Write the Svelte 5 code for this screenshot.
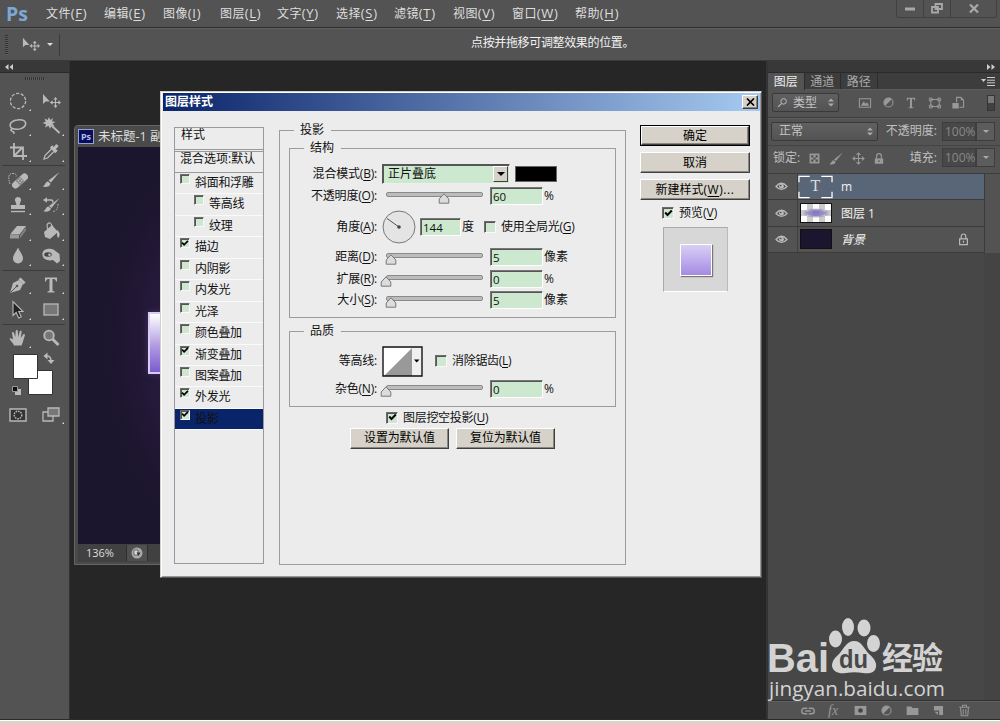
<script>
  const menus = [
    { text: "文件", key: "F", width: 58 },
    { text: "编辑", key: "E", width: 59 },
    { text: "图像", key: "I", width: 57 },
    { text: "图层", key: "L", width: 57 },
    { text: "文字", key: "Y", width: 59 },
    { text: "选择", key: "S", width: 58 },
    { text: "滤镜", key: "T", width: 59 },
    { text: "视图", key: "V", width: 59 },
    { text: "窗口", key: "W", width: 63 },
    { text: "帮助", key: "H", width: 60 },
  ];

  const toolGroups = [
    ["marquee", "move", "lasso", "wand", "crop", "dropper"],
    ["heal", "brush", "stamp", "history", "eraser", "bucket", "drop", "sponge"],
    ["pen", "type", "arrow", "rect"],
    ["hand", "zoom"],
  ];
  const noFlyout = ["move", "zoom"];

  let effects = $state([
    { name: "斜面和浮雕", on: false },
    { name: "等高线", on: false, sub: true },
    { name: "纹理", on: false, sub: true },
    { name: "描边", on: true },
    { name: "内阴影", on: false },
    { name: "内发光", on: false },
    { name: "光泽", on: false },
    { name: "颜色叠加", on: false },
    { name: "渐变叠加", on: true },
    { name: "图案叠加", on: false },
    { name: "外发光", on: true },
    { name: "投影", on: true },
  ]);
  let selected = $state("投影");
  let globalLight = $state(false);
  let antialias = $state(false);
  let knockout = $state(true);
  let preview = $state(true);

  const offsets = [
    { text: "距离", key: "D", value: 5, pos: 5, unit: "像素", height: 22 },
    { text: "扩展", key: "R", value: 0, pos: 0, unit: "%", height: 21 },
    { text: "大小", key: "S", value: 5, pos: 5, unit: "像素", height: 22 },
  ];

  const layers = [
    { name: "m", kind: "text" },
    { name: "图层 1", kind: "pixel" },
    { name: "背景", kind: "fill", locked: true },
  ];

  const icons = {
    marquee: `<circle cx="10" cy="10" r="7.6" fill="none" stroke="currentColor" stroke-width="1.3" stroke-dasharray="3.2 1.6"/>`,
    move: `<path d="M2 3v10l2.6-2.6h4.2z" fill="currentColor"/><path d="M14.5 7v9M10 11.5h9M13 8.5l1.5-1.7L16 8.5M13 14.5l1.5 1.7 1.5-1.7M11.5 10l-1.7 1.5 1.7 1.5M17.5 10l1.7 1.5-1.7 1.5" fill="none" stroke="currentColor" stroke-width="1.1"/>`,
    lasso: `<path d="M4.500 12.500C0 10.500 2 5 9 4c6-1 9.500 1 8.500 4.500-1 4-7 5.500-11 4.500-3-.7-4.500 1-3 2s3 0 2.500 3" fill="none" stroke="currentColor" stroke-width="1.500"/>`,
    wand: `<path d="M8 1l1.200 3L12 2l-1 3.200 3.500.8-3 1.500 2 2.800-3.200-.8L9 13 7.500 9.800 4 11.500l1-3.300L1.500 7l3.200-1.300L3.500 2.500 6.600 4z" fill="currentColor"/><path d="M10.500 9.500l8 7.500" stroke="currentColor" stroke-width="1.900"/>`,
    crop: `<path d="M6 1v13h13M2 5.500h13V18M6.500 13.500L15 5" fill="none" stroke="currentColor" stroke-width="1.800"/>`,
    dropper: `<path d="M3 17l1-3.500L11 6.500l2.500 2.500-7 7z" fill="none" stroke="currentColor" stroke-width="1.300"/><path d="M10 4.500l5.500 5.500M12.500 7.500l4-4.500" stroke="currentColor" stroke-width="3.200"/>`,
    heal: `<g transform="rotate(-42 12 11)"><rect x="2.500" y="7.500" width="19" height="7" rx="3.500" fill="currentColor"/><rect x="9" y="7.500" width="6" height="7" fill="#8a8a8a"/><path d="M10.500 9.500h1M13 9.500h1M10.500 12h1M13 12h1" stroke="#ddd"/></g><path d="M2 14C0 8 0 3 5 3.500s3 3 3 3" fill="none" stroke="currentColor" stroke-dasharray="1.500 1"/>`,
    brush: `<path d="M18.500 2L10 12.500 7.500 10.500z" fill="currentColor"/><path d="M7 11.500l2.500 2C9 17 5 17.500 1.500 16.500 4.500 15.500 4 12 7 11.500z" fill="currentColor"/>`,
    stamp: `<path d="M10 2a3 3 0 0 1 2.500 4.800L11.500 10H17v4H3v-4h5.500L7.500 6.800A3 3 0 0 1 10 2z" fill="currentColor"/><path d="M3 16.500h14" stroke="currentColor" stroke-width="1.400"/>`,
    history: `<path d="M18.500 3L10.500 13l-2.500-2z" fill="currentColor"/><path d="M7.500 11.500l2.500 2c-1 3.500-5 3.500-8 2.800C5 15.500 4.500 12 7.500 11.500z" fill="currentColor"/><path d="M5 5h5c2 0 2 1 1.500 2.500" fill="none" stroke="currentColor" stroke-width="1.500"/><path d="M2 5l4-2.800v5.600z" fill="currentColor"/><path d="M17 9q0 7-5 7.500" fill="none" stroke="currentColor" stroke-dasharray="1.500 1.200"/>`,
    eraser: `<path d="M2 13.500L9 5h9l-6.500 8.500z" fill="currentColor"/><path d="M2 14h9v3.500H2z" fill="#999"/><path d="M12 14l6-8v3.500l-6 8z" fill="#808080"/>`,
    bucket: `<path d="M3 11l8-7 6 7-8 7-5-2z" fill="currentColor"/><path d="M7 9c-3-8 3-9 4-4v5" fill="none" stroke="currentColor" stroke-width="1.200"/><path d="M16 9c3 2 3 5 2 7s-2 0-2-3z" fill="currentColor"/>`,
    drop: `<path d="M10 1.500C12 6 15 9 15 12.500a5 5 0 0 1-10 0C5 9 8 6 10 1.500z" fill="currentColor"/>`,
    sponge: `<path d="M1.500 7c1-4 7-5 11-3.500L18.500 8l.5 7-3 2.500-4-3.500c-5 1.500-11.500-1-10.500-7z" fill="currentColor"/><ellipse cx="7" cy="8.500" rx="3.800" ry="2.200" fill="#454545"/><circle cx="8.500" cy="8.700" r="1.300" fill="currentColor"/>`,
    pen: `<path d="M2 18l3-10 6-3 4 4-3 6z" fill="currentColor"/><path d="M2.500 17.500l5.500-5.500" stroke="#555"/><circle cx="9" cy="11" r="1.300" fill="#555"/><path d="M11.500 3.500l5 5" stroke="currentColor" stroke-width="3"/>`,
    type: `<path d="M4 2.500h12v4h-1c-.4-1.900-1-2.500-3.500-2.500v11c0 1 .5 1.300 2 1.500v1h-7v-1c1.500-.2 2-.5 2-1.500V4C6 4 5.400 4.600 5 6.500H4z" fill="currentColor"/>`,
    arrow: `<path d="M5 1.500v14l3.200-3 2.500 5.500 2.500-1.200-2.500-5.300H15z" fill="#222" stroke="currentColor" stroke-width="1.100"/>`,
    rect: `<rect x="3" y="4" width="14" height="11" fill="#777" stroke="currentColor" stroke-width="1.300"/>`,
    hand: `<path d="M6 17.500c-.5-2.500-4-4.500-4.500-7 1.500-1 2.500.5 3.500 1L4 5c0-1.500 1.700-1.500 2 0L7.300 9 7.700 3c.2-1.500 2-1.500 2.100 0l.4 6 1.500-5.500c.5-1.200 2.200-.8 2 .5L12.700 10l2.500-3.500c1-1 2.300 0 1.600 1.300C15.500 11 15 15 13.500 17.500z" fill="currentColor"/>`,
    zoom: `<circle cx="8" cy="7.500" r="4.800" fill="#777" stroke="currentColor" stroke-width="1.800"/><path d="M11.500 11l6 6" stroke="currentColor" stroke-width="3"/>`,
    image: `<path d="M2 4h16v12H2z" fill="none" stroke="currentColor" stroke-width="1.500"/><path d="M4 14l4-6 3 3 2-2 3 5z" fill="currentColor"/>`,
    adjust: `<circle cx="10" cy="10" r="7" fill="none" stroke="currentColor" stroke-width="1.600"/><path d="M15 5a7 7 0 0 0-10 10z" fill="currentColor"/>`,
    shape: `<path d="M4 5h12v10H4zM2 3h4v4H2zM14 3h4v4h-4zM2 13h4v4H2zM14 13h4v4h-4z" fill="none" stroke="currentColor" stroke-width="1.400"/>`,
    smart: `<path d="M8 9V2h6l4 4v10h-6" fill="none" stroke="currentColor" stroke-width="1.600"/><path d="M14 2v4h4M2 10h9v8H2z" fill="currentColor"/>`,
    grid: `<path d="M1 1h18v18H1z" fill="currentColor"/><path d="M4 4h4v4H4zM12 4h4v4h-4zM8 8h4v4H8zM4 12h4v4H4zM12 12h4v4h-4z" fill="#505050"/>`,
    cross: `<path d="M10 1v18M1 10h18M7 4.500l3-3 3 3M7 15.500l3 3 3-3M4.500 7l-3 3 3 3M15.500 7l3 3-3 3" fill="none" stroke="currentColor" stroke-width="1.700"/>`,
    lock: `<path d="M3 9h14v9H3z" fill="currentColor"/><path d="M6 9V5a4 4 0 0 1 8 0v4" fill="none" stroke="currentColor" stroke-width="2"/><path d="M10 12v3" stroke="#444" stroke-width="1.500"/>`,
    lockOutline: `<path d="M4 9h12v9H4zM6.500 9V5a3.500 3.500 0 0 1 7 0v4M10 12v3" fill="none" stroke="currentColor" stroke-width="1.800"/>`,
    eye: `<path d="M1.500 10q8.500-10 17 0-8.500 9-17 0z" fill="none" stroke="currentColor" stroke-width="2"/><circle cx="10" cy="9.500" r="3.700" fill="currentColor"/><circle cx="9" cy="8.500" r="1.100" fill="#333"/>`,
    link: `<path d="M9 6H5a4 4 0 0 0 0 8h4M11 6h4a4 4 0 0 1 0 8h-4M6 10h8" fill="none" stroke="currentColor" stroke-width="2"/>`,
    mask: `<path d="M1 3h18v14H1z" fill="currentColor"/><circle cx="10" cy="10" r="3.600" fill="#444"/>`,
    folder: `<path d="M1 4h7l2 2h9v11H1z" fill="currentColor"/>`,
    page: `<path d="M3 3h14v14h-6v-7H3z" fill="currentColor"/><path d="M4 12h5v5z" fill="currentColor"/>`,
    trash: `<path d="M4 6l1 12h10l1-12M2 5h16M7 5V2h6v3M8 8v8M12 8v8" fill="none" stroke="currentColor" stroke-width="1.600"/>`,
    search: `<circle cx="12" cy="8" r="5" fill="none" stroke="currentColor" stroke-width="1.800"/><path d="M8 12l-6 6" stroke="currentColor" stroke-width="2"/>`,
    quick: `<path d="M2 4h16v12H2z" fill="#333" stroke="currentColor" stroke-width="1.400"/><circle cx="10" cy="10" r="3.800" fill="none" stroke="currentColor" stroke-width="1.400" stroke-dasharray="1.600 .9"/>`,
    screen: `<path d="M2 7h10v9H2z" fill="#555" stroke="currentColor" stroke-width="1.300"/><path d="M7 3h11v8H7z" fill="#777" stroke="currentColor" stroke-width="1.300"/>`,
  };
</script>

{#snippet icon(name, size = 20)}
  <svg class="icon" width={size} height={size} viewBox="0 0 20 20">{@html icons[name]}</svg>
{/snippet}

{#snippet label(text, key, tail = "")}
  {text}<span class="key">(<u>{key}</u>){tail}</span>
{/snippet}

{#snippet box(on)}
  <span class="box">
    {#if on}
      <svg width="9" height="9" viewBox="0 0 9 9"><path d="M1.200 3.500l2.300 2.500L7.800 1.500" fill="none" stroke="#000" stroke-width="1.900" /></svg>
    {/if}
  </span>
{/snippet}

{#snippet slider(pos)}
  <div class="slider">
    <div class="track"></div>
    <svg class="thumb" style:left="{pos}px" width="12" height="11" viewBox="0 0 12 11"><path d="M6 .8l4.800 5.200v4.200H1.200V6z" fill="#dcdcdc" stroke="#777" /></svg>
  </div>
{/snippet}

<div class="app">
  <header class="menubar">
    <span class="brand">Ps</span>
    {#each menus as menu}
      <span class="menu" style:width="{menu.width}px">{@render label(menu.text, menu.key)}</span>
    {/each}
    <div class="winbtns">
      <span><svg width="10" height="4"><path d="M0 2h10" stroke="#a8a8a8" stroke-width="3" /></svg></span>
      <span><svg width="12" height="11" viewBox="0 0 12 11"><path d="M4.500 1h6.500v5H4.500zM1 4h6v5.500H1z" fill="#535353" stroke="#a8a8a8" stroke-width="1.800" /></svg></span>
      <span class="wide"><svg width="10" height="9" viewBox="0 0 10 9"><path d="M1 .5l8 8M9 .5l-8 8" stroke="#a8a8a8" stroke-width="2.200" /></svg></span>
    </div>
  </header>

  <div class="options">
    <span class="vgrip"></span>
    <span class="curtool">{@render icon("move", 19)}</span>
    <span class="caret"></span>
    <span class="vline"></span>
    <span class="hint">点按并拖移可调整效果的位置。</span>
  </div>

  <div class="work">
    <aside class="toolbox">
      <div class="strip left"><svg width="8" height="6"><path d="M3.500 0v6L0 3zM8 0v6L4.500 3z" fill="#ccc" /></svg></div>
      <div class="hgrip"><i></i></div>
      {#each toolGroups as group}
        <div class="tools">
          {#each group as tool}
            <span class="tool" class:fly={!noFlyout.includes(tool)}>{@render icon(tool)}</span>
          {/each}
        </div>
      {/each}
      <svg class="swatches" width="69" height="50" viewBox="0 1 69 50">
        <path d="M28.500 20.500h24v24h-24z" fill="#fff" stroke="#333" />
        <path d="M13.500 4.500h24v24h-24z" fill="#fff" stroke="#333" />
        <path d="M46 6q5-.5 5 5" fill="none" stroke="#bbb" stroke-width="1.500" />
        <path d="M47.500 2.500v7L43.500 6zM47.500 10h7L51 14z" fill="#bbb" />
        <path d="M15 39h6v6h-6z" fill="#bbb" /><path d="M12.500 36.500h5v5h-5z" fill="#111" stroke="#999" />
      </svg>
      <div class="tools">
        <span class="tool">{@render icon("quick")}</span>
        <span class="tool fly">{@render icon("screen")}</span>
      </div>
    </aside>

    <main class="canvas">
      <section class="doc">
        <div class="doc-title"><span class="ps">Ps</span>未标题-1 副本</div>
        <div class="art"><div class="glyph"></div></div>
        <div class="doc-status">
          <span class="pct">136%</span>
          <span class="info"><svg width="12" height="12" viewBox="0 0 12 12"><circle cx="6" cy="6" r="5.500" fill="#aaa" /><path d="M3 3h4v5H3z" fill="#ddd" stroke="#555" stroke-width=".8" /><path d="M5.500 5.500h4L7.500 9z" fill="#333" /></svg></span>
        </div>
      </section>
    </main>

    <aside class="panel">
      <div class="strip right"><svg width="8" height="6"><path d="M0 0v6l3.500-3zM4.500 0v6L8 3z" fill="#ccc" /></svg></div>
      <div class="tabs">
        <span class="tab active">图层</span>
        <span class="tab">通道</span>
        <span class="tab">路径</span>
        <svg class="flymenu" width="14" height="9" viewBox="0 0 14 9"><path d="M0 2h5L2.500 5z" fill="#ccc" /><path d="M6 .5h8M6 3.200h8M6 5.800h8M6 8.500h8" stroke="#ccc" /></svg>
      </div>
      <div class="filter">
        <div class="drop kind">{@render icon("search", 11)}<span>类型</span><svg width="6" height="9"><path d="M0 3.500h6L3 .5zM0 5.500h6L3 8.500z" fill="#aaa" /></svg></div>
        <div class="filter-icons">
          {@render icon("image", 14)}
          {@render icon("adjust", 13)}
          {@render icon("type", 14)}
          {@render icon("shape", 14)}
          {@render icon("smart", 14)}
        </div>
        <span class="toggle"></span>
      </div>
      <div class="blend">
        <div class="drop mode"><span>正常</span><svg width="6" height="9"><path d="M0 3.500h6L3 .5zM0 5.500h6L3 8.500z" fill="#aaa" /></svg></div>
        <span class="plabel">不透明度:</span>
        <span class="pval">100%</span><span class="pbtn"><i class="caret"></i></span>
      </div>
      <div class="blend locks">
        <span>锁定:</span>
        <div class="lock-icons">
          {@render icon("grid", 11)}
          {@render icon("brush", 16)}
          {@render icon("cross", 13)}
          {@render icon("lock", 12)}
        </div>
        <span class="plabel">填充:</span>
        <span class="pval">100%</span><span class="pbtn"><i class="caret"></i></span>
      </div>
      <div class="layers">
        {#each layers as layer, i}
          <div class="layer" class:current={i === 0}>
            <span class="eye">{@render icon("eye", 13)}</span>
            <span class="thumbwrap">
              {#if layer.kind === "text"}
                <svg width="36" height="24" viewBox="0 0 36 24"><path d="M1 7V1h11M24 1h11v6M35 17v6H24M12 23H1v-6" fill="none" stroke="#fff" stroke-width="1.300" /></svg>
                <b class="tglyph">T</b>
              {:else}
                <span class="thumbbox {layer.kind}"></span>
              {/if}
            </span>
            <span class="lname" class:italic={layer.locked}>{layer.name}</span>
            {#if layer.locked}<span class="llock">{@render icon("lockOutline", 13)}</span>{/if}
          </div>
        {/each}
      </div>
      <div class="void"></div>
      <div class="foot">
        {@render icon("link", 14)}
        <em>fx</em>
        {@render icon("mask", 13)}
        {@render icon("adjust", 13)}
        {@render icon("folder", 13)}
        {@render icon("page", 13)}
        {@render icon("trash", 13)}
      </div>
    </aside>
  </div>
  <div class="taskbar"></div>

  <section class="dialog">
    <div class="titlebar">
      <span>图层样式</span>
      <button class="close" aria-label="关闭"><svg width="9" height="8" viewBox="0 0 9 8"><path d="M1 .5l7 7M8 .5l-7 7" stroke="#000" stroke-width="1.700" /></svg></button>
    </div>
    <div class="body">
      <div class="styles">
        <div class="styles-head">样式</div>
        <div class="styles-blend">混合选项:默认</div>
        {#each effects as fx}
          <div class="fx" class:sub={fx.sub} class:sel={fx.name === selected}>
            {@render box(fx.on)}<span class="fx-name">{fx.name}</span>
          </div>
        {/each}
      </div>

      <fieldset class="outer">
        <legend>投影</legend>
        <fieldset class="group structure">
          <legend>结构</legend>
          <div class="row mode-row">
            <span class="rlabel">{@render label("混合模式", "B", ":")}</span>
            <div class="select"><span>正片叠底</span><i><b></b></i></div>
            <span class="color"></span>
          </div>
          <div class="row opacity-row">
            <span class="rlabel">{@render label("不透明度", "O", ":")}</span>
            {@render slider(58)}
            <span class="field">60</span><span class="unit">%</span>
          </div>
          <div class="row angle-row">
            <span class="rlabel">{@render label("角度", "A", ":")}</span>
            <svg class="dial" width="34" height="34" viewBox="0 0 34 34">
              <circle cx="17" cy="17" r="16" fill="#e4e4e4" stroke="#777" />
              <path d="M5 8.500L17 17" stroke="#555" /><circle cx="17" cy="17" r="1.800" fill="#444" />
            </svg>
            <span class="field short">144</span><span class="unit deg">度</span>
            {@render box(globalLight)}<span class="btext">{@render label("使用全局光", "G")}</span>
          </div>
          {#each offsets as o}
            <div class="row" style:height="{o.height}px">
              <span class="rlabel">{@render label(o.text, o.key, ":")}</span>
              {@render slider(o.pos)}
              <span class="field">{o.value}</span><span class="unit">{o.unit}</span>
            </div>
          {/each}
        </fieldset>

        <fieldset class="group quality">
          <legend>品质</legend>
          <div class="row contour-row">
            <span class="rlabel">等高线<span class="key">:</span></span>
            <svg class="contour" width="41" height="31" viewBox="0 0 41 31">
              <path d="M.5.500h40v30H.5z" fill="#fff" />
              <path d="M2 30L30 2v28z" fill="#999" />
              <path d="M30 1h10v29H30z" fill="#f0f0f0" />
              <path d="M1 1h39v29H1z" fill="none" stroke="#111" stroke-width="1.400" />
              <path d="M32 13.500h5.500L34.700 16.500z" fill="#000" />
            </svg>
            {@render box(antialias)}<span class="btext">{@render label("消除锯齿", "L")}</span>
          </div>
          <div class="row noise-row">
            <span class="rlabel">{@render label("杂色", "N", ":")}</span>
            {@render slider(0)}
            <span class="field">0</span><span class="unit">%</span>
          </div>
        </fieldset>

        <div class="knock">{@render box(knockout)}<span class="btext">{@render label("图层挖空投影", "U")}</span></div>
        <div class="defaults">
          <button class="btn">设置为默认值</button>
          <button class="btn">复位为默认值</button>
        </div>
      </fieldset>

      <div class="actions">
        <button class="btn primary">确定</button>
        <button class="btn">取消</button>
        <button class="btn new-style">{@render label("新建样式", "W", "...")}</button>
        <div class="pv">{@render box(preview)}<span>{@render label("预览", "V")}</span></div>
        <div class="pvbox"><i></i></div>
      </div>
    </div>
  </section>

  <svg class="watermark" width="190" height="90" viewBox="0 0 190 90">
    <g fill="#d3d3d3">
      <text x="0" y="55" font-size="40" font-weight="bold" textLength="62" lengthAdjust="spacingAndGlyphs" class="wm">Bai</text>
      <ellipse cx="68.500" cy="22" rx="6.500" ry="8.500" />
      <ellipse cx="81" cy="10" rx="6" ry="9" />
      <ellipse cx="97" cy="11" rx="6.500" ry="8.500" />
      <ellipse cx="106.500" cy="26.500" rx="6.500" ry="8.500" />
      <path d="M87 24c8 0 10 8 15 13 5 4 8 9 7 13-1 6-7 7-13 6-6-1-11-1-17 0-7 1-13-1-14-7 0-6 4-9 8-13 4-5 7-12 14-12z" />
      <text x="115" y="52" font-size="31" font-weight="bold" textLength="61" class="cjk">经验</text>
      <text x="2" y="79" font-size="20" textLength="176" lengthAdjust="spacingAndGlyphs" class="url">jingyan.baidu.com</text>
    </g>
    <text x="72" y="51" font-size="25" font-weight="bold" fill="#484848" textLength="29" lengthAdjust="spacingAndGlyphs" class="wm">du</text>
  </svg>
</div>

<style>
  :global(body) {
    margin: 0;
    overflow: hidden;
  }

  .app {
    position: relative;
    display: flex;
    flex-direction: column;
    width: 1000px;
    height: 724px;
    overflow: hidden;
    background: #262626;
    color: #dedede;
    font: 12px/14px "Open Sans", "Noto Sans CJK SC", sans-serif;
    white-space: nowrap;
  }

  .app :global(*) {
    box-sizing: border-box;
  }

  .icon {
    display: block;
    flex: none;
    color: #b9b9b9;
  }

  /* Menu bar */
  .menubar {
    display: flex;
    align-items: center;
    height: 28px;
    background: #535353;
    border-bottom: 1px solid #2d2d2d;
  }

  .brand {
    width: 46px;
    padding-left: 6px;
    color: #7da7d5;
    font: bold 19.500px/24px "Open Sans", sans-serif;
  }

  .menu {
    flex: none;
    letter-spacing: 0.4px;
  }

  .menubar .key {
    font-size: 13px;
    letter-spacing: 0.7px;
  }

  .winbtns {
    display: flex;
    align-self: flex-start;
    margin-left: auto;
    margin-right: 3px;
    height: 18px;
    border: 1px solid #404040;
    border-top: 0;
    border-radius: 0 0 3px 3px;
  }

  .winbtns span {
    display: flex;
    align-items: center;
    justify-content: center;
    width: 27px;
    border-right: 1px solid #404040;
  }

  .winbtns .wide {
    width: 45px;
    border-right: 0;
  }

  .options {
    display: flex;
    align-items: center;
    height: 33px;
    background: #535353;
    border-top: 1px solid #626262;
    border-bottom: 1px solid #3a3a3a;
  }

  .vgrip {
    width: 3px;
    height: 20px;
    margin-left: 5px;
    background: repeating-linear-gradient(#333 0 1px, #5c5c5c 1px 2px);
  }

  .curtool {
    margin: 0 7px 0 13px;
  }

  .caret {
    width: 0;
    height: 0;
    border: 3px solid transparent;
    border-top-color: #ddd;
    border-bottom: 0;
  }

  .vline {
    width: 1px;
    height: 22px;
    margin-left: 6px;
    background: #3c3c3c;
  }

  .hint {
    margin-left: 411px;
    padding-bottom: 3px;
    color: #f2f2f2;
    letter-spacing: -0.35px;
  }

  .work {
    display: flex;
    flex: 1;
    min-height: 0;
  }

  .strip {
    display: flex;
    align-items: center;
    height: 12px;
    padding: 0 5px;
    background: #383838;
    border-bottom: 1px solid #2a2a2a;
  }

  .strip.right {
    justify-content: flex-end;
  }

  /* Toolbox */
  .toolbox {
    width: 70px;
    background: #535353;
    border-right: 1px solid #333;
  }

  .hgrip {
    display: flex;
    justify-content: center;
    height: 14px;
    padding-top: 4px;
  }

  .hgrip i {
    width: 19px;
    height: 3px;
    background: repeating-linear-gradient(90deg, #333 0 1px, #5c5c5c 1px 2px);
  }

  .tools {
    display: grid;
    grid-template-columns: 33px 33px;
    grid-auto-rows: 25.500px;
    margin: 0 4px 0 2px;
    padding: 1px 0 0.700px;
  }

  .tools + .tools {
    border-top: 1px solid #3b3b3b;
  }

  .tool {
    position: relative;
    display: flex;
    align-items: center;
    justify-content: center;
    padding-right: 1px;
  }

  .tool.fly::after {
    content: "";
    position: absolute;
    right: 4px;
    bottom: 3px;
    border: 1.500px solid transparent;
    border-right-color: #ddd;
    border-bottom-color: #ddd;
  }

  .swatches {
    display: block;
    margin-top: -1px;
  }

  /* Document window */
  .canvas {
    position: relative;
    flex: 1;
    background: #262626;
  }

  .doc {
    position: absolute;
    left: 4px;
    top: 64px;
    width: 600px;
    height: 440px;
    display: flex;
    flex-direction: column;
    padding: 0 3px 2px;
    border: 1px solid #656565;
    border-radius: 4px 4px 0 0;
    background: #4a4a4a;
  }

  .doc-title {
    display: flex;
    align-items: center;
    height: 21px;
    font-size: 12.500px;
  }

  .ps {
    width: 16px;
    height: 15px;
    margin-right: 4px;
    border: 1px solid #8fa2dc;
    background: #0c0e55;
    color: #b4c0f4;
    font: bold 9px/13px "Open Sans", sans-serif;
    text-align: center;
  }

  .art {
    flex: 1;
    background: radial-gradient(ellipse 90px 180px at 120px 195px, #2f1f48, #1c152e);
  }

  .glyph {
    width: 60px;
    height: 62px;
    margin: 165px 0 0 70px;
    border: 2px solid #d8ccf5;
    background: linear-gradient(#fff, #b09be0 55%, #7d5bcf);
    box-shadow: 0 0 6px #453463;
  }

  .doc-status {
    display: flex;
    align-items: center;
    height: 18px;
    background: #414141;
    font-size: 11px;
  }

  .pct {
    width: 48px;
    padding-left: 8px;
  }

  .info {
    display: flex;
    align-items: center;
    justify-content: center;
    width: 22px;
    height: 16px;
    border-right: 1px solid #2e2e2e;
    border-left: 1px solid #2e2e2e;
    background: #505050;
  }

  /* Layers panel */
  .panel {
    display: flex;
    flex-direction: column;
    width: 234px;
    border-left: 2px solid #343434;
    background: #535353;
  }

  .tabs {
    display: flex;
    height: 17px;
    background: #3d3d3d;
    border-bottom: 1px solid #5b5b5b;
  }

  .tab {
    width: 36.500px;
    border-right: 1px solid #2c2c2c;
    line-height: 17px;
    text-align: center;
    color: #aaa;
  }

  .tab.active {
    height: 17px;
    background: #535353;
    color: #eee;
  }

  .flymenu {
    margin: 4px 5px 0 auto;
  }

  .filter {
    display: flex;
    align-items: center;
    height: 28px;
    padding: 0 0 2px 4px;
    border-bottom: 1px solid #3d3d3d;
  }

  .drop {
    display: flex;
    align-items: center;
    height: 19px;
    padding: 0 4px;
    border: 1px solid #393939;
    border-radius: 2px;
    background: linear-gradient(#606060, #535353);
    color: #c4c4c4;
  }

  .drop svg:last-child {
    margin-left: auto;
  }

  .kind {
    width: 67px;
    gap: 5px;
  }

  .filter-icons {
    display: flex;
    align-items: center;
    gap: 9.500px;
    margin-left: 19px;
  }

  .filter-icons .icon,
  .lock-icons .icon {
    color: #999;
  }

  .toggle {
    width: 8px;
    height: 16px;
    margin-left: auto;
    margin-right: 5px;
    border: 1px solid #353535;
    background: linear-gradient(#777 50%, #414141 50%);
  }

  .blend {
    display: flex;
    align-items: center;
    height: 27px;
    padding: 0 5px 2px 3px;
    border-top: 1px solid #5e5e5e;
  }

  .mode {
    width: 107px;
    padding-left: 7px;
  }

  .plabel {
    margin-left: auto;
    margin-right: 5px;
    color: #c0c0c0;
  }

  .pval {
    width: 34px;
    height: 19px;
    padding-left: 2px;
    background: #484848;
    border: 1px solid #3d3d3d;
    line-height: 17px;
    color: #898989;
  }

  .pbtn {
    display: flex;
    align-items: center;
    justify-content: center;
    width: 19px;
    height: 19px;
    border: 1px solid #3d3d3d;
    background: #5c5c5c;
  }

  .pbtn .caret {
    border-top-color: #aaa;
  }

  .locks {
    height: 29px;
    padding-left: 5px;
    padding-bottom: 4px;
    border-top-color: #444;
    border-bottom: 1px solid #3d3d3d;
    color: #c0c0c0;
  }

  .lock-icons {
    display: flex;
    align-items: center;
    gap: 8px;
    margin-left: 9px;
    padding-top: 2px;
  }

  .layers {
    width: 217px;
    border-right: 1px solid #3b3b3b;
  }

  .layer {
    display: flex;
    align-items: center;
    height: 26.400px;
    border-bottom: 1px solid #3b3b3b;
  }

  .eye {
    display: flex;
    align-self: stretch;
    align-items: center;
    justify-content: center;
    width: 30px;
    padding-right: 2px;
    background: #535353;
    border-right: 1px solid #3f3f3f;
  }

  .layer.current {
    background: #596678;
  }

  .thumbwrap {
    position: relative;
    display: flex;
    justify-content: center;
    width: 35px;
  }

  .tglyph {
    position: absolute;
    top: 3px;
    font: 16px/16px "Liberation Serif", serif;
  }

  .thumbbox {
    width: 32px;
    height: 20px;
    border: 1px solid #111;
    background: #1c1530;
  }

  .thumbbox.pixel {
    background:
      radial-gradient(ellipse 14px 5px, #8378b8, #8378b8cc 60%, transparent),
      repeating-conic-gradient(#ccc 0 25%, #fff 0 50%) 0 0 / 12px 12px;
  }

  .lname {
    margin-left: 8px;
    padding-top: 1px;
    color: #f2f2f2;
  }

  .italic {
    font-style: italic;
  }

  .llock {
    margin-left: auto;
    margin-right: 14px;
  }

  .void {
    flex: 1;
    background: #474747;
    border-right: 16px solid #444;
  }

  .foot {
    display: flex;
    align-items: center;
    gap: 13px;
    height: 18px;
    padding-left: 33px;
    border-top: 1px solid #606060;
    box-shadow: 0 -1px #333;
  }

  .foot .icon {
    color: #989898;
  }

  .foot em {
    width: 13px;
    color: #989898;
    font: italic 14px/14px "Liberation Serif", serif;
  }

  .taskbar {
    height: 5px;
    border-top: 1px solid #2b2b2b;
    background: linear-gradient(#fff 1px, #d8d4c8 1px);
  }

  /* Layer style dialog */
  .dialog {
    position: absolute;
    left: 160px;
    top: 91px;
    width: 602px;
    height: 487px;
    padding: 1px;
    border: 1px solid;
    border-color: #d4d0c8 #55565a #55565a #d4d0c8;
    box-shadow: inset 1px 1px #fff, inset -1px -1px #999;
    background: #ececec;
    color: #111;
  }

  .titlebar {
    display: flex;
    align-items: center;
    justify-content: space-between;
    height: 18px;
    margin-left: 1px;
    padding: 0 2px;
    background: linear-gradient(90deg, #0a246a, #a6caf0);
    color: #fff;
    font-weight: bold;
  }

  button {
    display: flex;
    align-items: center;
    justify-content: center;
    padding: 0;
    border: 1px solid;
    border-color: #fff #404040 #404040 #fff;
    box-shadow: inset -1px -1px #8a8780;
    background: #d6d2c9;
    color: #000;
    font: inherit;
  }

  .close {
    width: 16px;
    height: 14px;
  }

  .body {
    display: flex;
    align-items: flex-start;
    padding: 12px 10px 0 12px;
  }

  .styles {
    width: 90px;
    height: 437px;
    margin-top: 4px;
    border: 1px solid #999;
  }

  .styles-head {
    height: 24px;
    padding: 0 6px;
    border-bottom: 3px double #999;
    line-height: 14px;
  }

  .styles-blend {
    height: 21px;
    padding-left: 5px;
    border-bottom: 1px solid #999;
    line-height: 14px;
  }

  .fx {
    display: flex;
    height: 21.450px;
    padding-left: 5px;
    border-bottom: 1px solid #fafafa;
  }

  .fx.sub {
    padding-left: 19px;
  }

  .fx.sel {
    background: #0a246a;
  }

  .box {
    display: inline-flex;
    flex: none;
    align-items: center;
    justify-content: center;
    width: 12px;
    height: 12px;
    border: 1px solid;
    border-color: #6c6c6c #f8f8f8 #f8f8f8 #6c6c6c;
    box-shadow: inset 1px 1px #555;
    background: #cfe6d0;
  }

  .fx .box {
    width: 10px;
    height: 10px;
    margin-top: 1px;
  }

  .fx-name {
    margin-left: 5px;
    padding-top: 3px;
    letter-spacing: -0.3px;
  }

  fieldset {
    min-width: 0;
    margin: 0;
    padding: 0;
    border: 1px solid #9c9c9c;
  }

  legend {
    height: 14px;
    margin-left: 14px;
    padding: 0 7px 0 6px;
    line-height: 13px;
  }

  .outer {
    width: 347px;
    height: 442px;
    margin-left: 15px;
  }

  .group {
    width: 327px;
    margin-left: 9px;
  }

  .structure {
    height: 177px;
    margin-top: 4px;
  }

  .structure .mode-row {
    margin-top: 8px;
    height: 21px;
  }

  .quality {
    height: 83px;
    margin-top: 6px;
  }

  .row {
    display: flex;
    align-items: center;
  }

  .opacity-row {
    height: 24px;
  }

  .angle-row {
    height: 38px;
  }

  .quality .contour-row {
    margin-top: 6px;
    height: 34px;
  }

  .noise-row {
    height: 22px;
  }

  .rlabel {
    display: flex;
    justify-content: flex-end;
    width: 87px;
    margin-right: 5px;
    letter-spacing: -0.200px;
  }

  .key {
    font-size: 12px;
  }

  u {
    text-underline-offset: 2px;
  }

  .select {
    display: flex;
    align-items: center;
    width: 128px;
    height: 20px;
    padding: 2px 1px 1px 5px;
    border: 1px solid;
    border-color: #555 #eee #eee #555;
    box-shadow: inset 1px 1px #555;
    background: #cce8cf;
  }

  .select i {
    display: flex;
    align-items: center;
    justify-content: center;
    width: 15px;
    height: 16px;
    margin-left: auto;
    border: 1px solid;
    border-color: #fff #404040 #404040 #fff;
    background: #d6d2c9;
  }

  .select b {
    border: 4px solid transparent;
    border-top-color: #000;
    border-bottom: 0;
  }

  .color {
    width: 42px;
    height: 16px;
    margin-left: 5px;
    border: 1px solid #666;
    background: #000;
  }

  .slider {
    position: relative;
    width: 98px;
    height: 14px;
    margin: 0 7px 0 3px;
    padding: 3px 0 0 1px;
  }

  .track {
    height: 5px;
    border: 1px solid #8a8a8a;
    border-radius: 2px;
    background: #bcbcbc;
  }

  .thumb {
    position: absolute;
    top: 4px;
    margin-left: -5px;
  }

  .field {
    width: 53px;
    height: 18px;
    padding-left: 2px;
    border: 1px solid;
    border-color: #777 #fff #fff #777;
    box-shadow: inset 1px 1px #555;
    background: #cce8cf;
    font-size: 11.500px;
    line-height: 17px;
  }

  .unit {
    margin-left: 1px;
  }

  .dial {
    margin-right: 4px;
  }

  .field.short {
    width: 41px;
  }

  .deg {
    width: 22px;
  }

  .btext {
    margin-left: 5px;
    letter-spacing: -0.300px;
  }

  .contour {
    margin-right: 12px;
  }

  .knock {
    display: flex;
    align-items: center;
    height: 21px;
    padding-left: 106px;
  }

  .defaults {
    display: flex;
    gap: 7px;
    padding: 0 0 0 70px;
  }

  .defaults .btn {
    width: 99px;
    height: 21px;
    padding-bottom: 2px;
    letter-spacing: -0.200px;
  }

  .actions {
    display: flex;
    flex-direction: column;
    width: 110px;
    margin: 2px 0 0 14px;
  }

  .actions .btn {
    height: 21px;
    margin-bottom: 6px;
  }

  .new-style .key {
    letter-spacing: 0.600px;
  }

  .actions .primary {
    height: 21px;
    outline: 1px solid #000;
    outline-offset: -1px;
    border: 2px solid;
    border-color: #fff #404040 #404040 #fff;
  }

  .pv {
    display: flex;
    align-items: center;
    gap: 5px;
    height: 14px;
    padding-left: 22px;
  }

  .pvbox {
    display: flex;
    align-items: center;
    justify-content: center;
    width: 65px;
    height: 65px;
    margin: 7px 0 0 23px;
    border: 1px solid;
    border-color: #aaa #bbb #fff #aaa;
    background: #d7d7d7;
  }

  .pvbox i {
    width: 32px;
    height: 32px;
    border: 1px solid #fff;
    background: linear-gradient(#d9cff5, #a58be2);
    box-shadow: 1px 1px 1px #777;
  }

  /* Site mark over the panel */
  .watermark {
    position: absolute;
    left: 767px;
    top: 617px;
  }

  .wm {
    font-family: "Liberation Sans", sans-serif;
  }

  .cjk {
    font-family: "Noto Sans CJK SC", sans-serif;
  }

  .url {
    font-family: "Open Sans", sans-serif;
  }
</style>
